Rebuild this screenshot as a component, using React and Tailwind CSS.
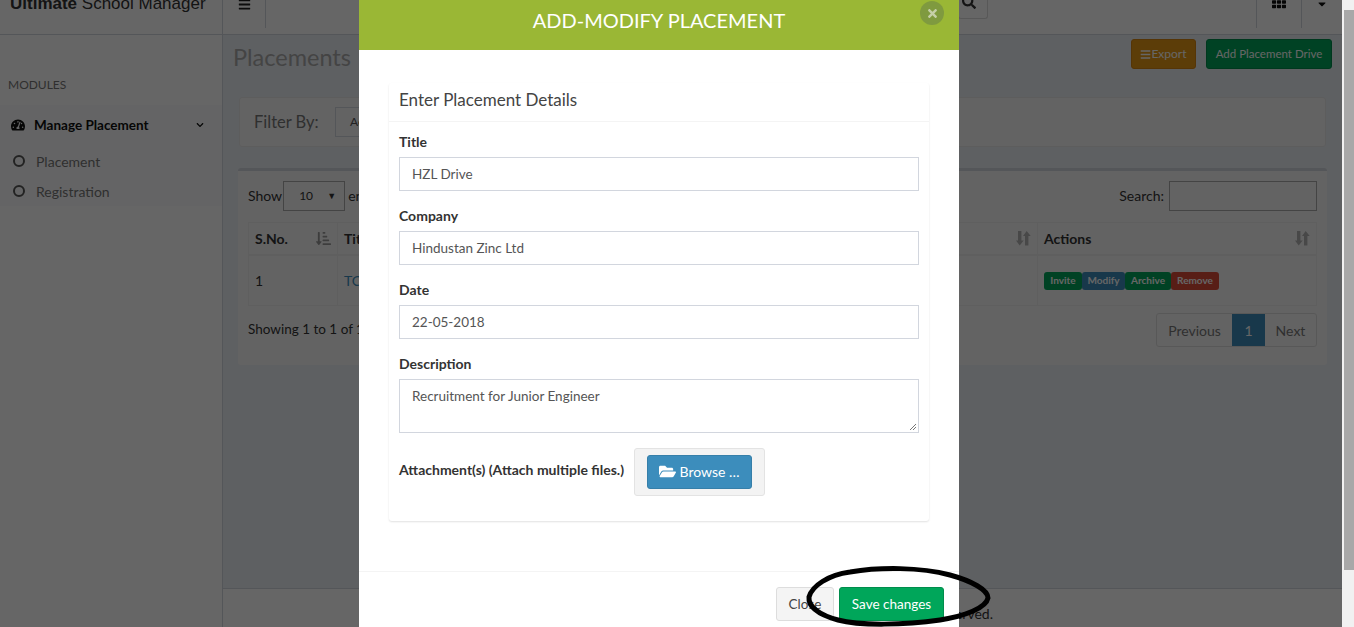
import React from "react";
import { FaBars, FaChevronDown, FaFolderOpen, FaSearch, FaSortAmountDownAlt, FaTachometerAlt, FaTh, FaTimes, FaCaretDown } from "react-icons/fa";

const bodyFont = { fontFamily: "Lato, 'Open Sans', sans-serif" };

const SortIcon = () => (
  <svg viewBox="0 0 16 16" className="w-[16px] h-[16px] text-[#b5b5b5]" fill="currentColor">
    <path d="M3 1h3.400v9.500h2.300L4.700 15.500 1 10.500h2z" />
    <path d="M10 15.500h3.400V6h2.300L11.700 1 8 6h2z" />
  </svg>
);

const Field = ({ label, value, height = "h-[34px]", multi, mb = "mb-[15px]" }) => (
  <div className={mb}>
    <label className="block text-[14px] font-bold leading-[20px] mb-[5px] text-[#333]">{label}</label>
    {multi ? (
      <div className={`w-full ${height} border border-[#d2d6de] px-3 py-[6px] text-[13.5px] leading-[20px] text-[#555] relative`}>
        {value}
        <svg viewBox="0 0 8 8" className="absolute right-[1px] bottom-[1px] w-2 h-2 text-[#777]" stroke="currentColor" fill="none">
          <path d="M1 7 7 1M4 7 7 4" />
        </svg>
      </div>
    ) : (
      <div className={`w-full ${height} border border-[#d2d6de] px-3 flex items-center text-[13.5px] text-[#555]`}>{value}</div>
    )}
  </div>
);

const Tag = ({ children, color, width }) => (
  <span className={`${color} ${width} text-white text-[10px] font-bold h-[18px] rounded-[3px] flex items-center justify-center`}>{children}</span>
);

const Page = () => (
  <div className="flex-1 flex flex-col h-full bg-[#ecf0f5] text-[#333]">
    <header className="h-[35px] shrink-0 flex bg-white border-b border-[#d2d6de]">
      <div className="w-[223px] shrink-0 border-r border-[#d2d6de] relative overflow-hidden">
        <div className="absolute left-[10px] top-[-6px] text-[17px] leading-[20px] text-[#333]" style={{ fontFamily: "'Liberation Sans', sans-serif" }}>
          <b>Ultimate</b> School Manager
        </div>
      </div>
      <div className="w-[43px] h-[28px] shrink-0 border-r border-[#d2d6de] flex justify-center">
        <FaBars className="mt-[-2px] text-[13px] text-[#222]" />
      </div>
      <div className="flex-1 flex justify-end">
        <div className="w-[30px] h-[19px] mr-[268px] pl-[3px] border border-t-0 border-[#ddd] rounded-b-[3px] flex justify-start">
          <FaSearch className="mt-[-5px] text-[14px] text-[#333]" />
        </div>
      </div>
      <div className="w-[46px] h-[28px] border-x border-[#d2d6de] flex justify-center">
        <FaTh className="mt-[-5px] text-[14px] text-[#111]" />
      </div>
      <div className="w-[40px] h-[28px] flex justify-center">
        <FaCaretDown className="mt-[-2px] text-[12px] text-[#111]" />
      </div>
    </header>

    <div className="flex flex-1 min-h-0">
      <aside className="w-[223px] shrink-0 bg-white border-r border-[#d2d6de]" style={bodyFont}>
        <div className="pl-2 pt-[43px] text-[12px] leading-[14px] text-[#777]">MODULES</div>
        <div className="mt-[13px] h-[101px] bg-[#fafbfc]">
          <div className="flex items-center h-[41px] pl-[11px] pr-[18px] pb-[1px] text-[13.5px] font-bold text-[#111]">
            <FaTachometerAlt className="text-[14px] w-[14px] mr-[9px]" />
            <span className="flex-1">Manage Placement</span>
            <FaChevronDown className="text-[8px]" />
          </div>
          <div className="flex items-center h-[30px] pl-[13px] text-[14px] text-[#777]">
            <span className="w-[12px] h-[12px] rounded-full border-2 border-[#555] mr-[11px]" />
            Placement
          </div>
          <div className="flex items-center h-[30px] pl-[13px] text-[14px] text-[#777]">
            <span className="w-[12px] h-[12px] rounded-full border-2 border-[#555] mr-[11px]" />
            Registration
          </div>
        </div>
      </aside>

      <main className="flex-1 flex flex-col min-w-0" style={bodyFont}>
        <div className="h-[62px] shrink-0 flex items-start pl-[10px] pr-[10px] pt-[4px]">
          <h1 className="flex-1 text-[23.5px] leading-[37px] text-[#aaa]">Placements</h1>
          <button className="w-[65px] h-[30px] bg-[#e69914] border border-[#d58512] rounded-[3px] text-white text-[12px] flex items-center justify-center">
            <FaBars className="text-[11px]" />Export
          </button>
          <button className="w-[126px] h-[30px] ml-[10px] bg-[#00a65a] border border-[#008d4c] rounded-[3px] text-white text-[11.500px]">
            Add Placement Drive
          </button>
        </div>

        <section className="mx-[16px] h-[50px] shrink-0 bg-[#f8f8f8] border border-[#e8e8e8] rounded-[3px] flex items-center pl-[14px]">
          <span className="text-[16.500px] w-[66px] text-[#777]">Filter By:</span>
          <span className="ml-[15px] w-[60px] h-[30px] border border-[#d2d6de] pl-[14px] flex items-center text-[12px] text-[#555]">Ac</span>
        </section>

        <section className="mx-[15px] mt-[21px] h-[197px] shrink-0 bg-[#f8f8f8] border-t-[3px] border-[#d2d6de] rounded-[3px] px-[10px] pt-[10px]">
          <div className="flex items-center h-[30px] text-[14px]">
            <span className="mb-[2px]">Show</span>
            <span className="ml-[1px] w-[62px] h-[30px] border border-[#aaa] flex items-center justify-between px-[15px] pr-[8px] text-[12px]">
              10 <span className="text-[9px]">▼</span>
            </span>
            <span className="ml-[3px] flex-1 mb-[2px]">entries</span>
            <span className="mb-[2px]">Search:</span>
            <span className="ml-[5px] w-[148px] h-[30px] border border-[#aaa]" />
          </div>
          <div className="mt-[11px] border border-[#eee]">
            <div className="flex h-[33px] border-b-2 border-[#eee] items-center text-[14px] font-bold">
              <div className="w-[89px] h-full px-[6px] pb-[1px] flex items-center justify-between border-r border-[#eee]">
                S.No. <FaSortAmountDownAlt className="text-[15px] text-[#999]" />
              </div>
              <div className="flex-1 h-full px-[6px] pb-[1px] flex items-center justify-between">Title <SortIcon /></div>
              <div className="w-[279px] h-full px-[6px] pb-[1px] flex items-center justify-between border-l border-[#eee]">Actions <SortIcon /></div>
            </div>
            <div className="flex h-[49px] items-center text-[14px]">
              <div className="w-[89px] h-full px-[6px] flex items-center border-r border-[#eee]">1</div>
              <div className="flex-1 h-full px-[6px] flex items-center text-[#3c8dbc]">TCS Drive</div>
              <div className="w-[279px] h-full px-[6px] flex items-center border-l border-[#eee]">
                <Tag color="bg-[#00a65a]" width="w-[38px]">Invite</Tag>
                <Tag color="bg-[#3c8dbc]" width="w-[43px]">Modify</Tag>
                <Tag color="bg-[#00a65a]" width="w-[46px]">Archive</Tag>
                <Tag color="bg-[#dd4b39]" width="w-[48px]">Remove</Tag>
              </div>
            </div>
          </div>
          <div className="mt-[7px] flex items-center justify-between text-[14px]">
            <span className="mb-[2px] text-[13.500px]">Showing 1 to 1 of 1 entries</span>
            <div className="flex h-[34px] border border-[#ddd] rounded-[3px] text-[#777]">
              <span className="w-[75px] flex items-center justify-center">Previous</span>
              <span className="w-[33px] flex items-center justify-center bg-[#3c8dbc] text-white">1</span>
              <span className="w-[51px] flex items-center justify-center">Next</span>
            </div>
          </div>
        </section>

        <div className="flex-1" />
        <footer className="h-[39px] shrink-0 bg-white border-t border-[#d2d6de] flex items-end pb-[3px] text-[14px] w-full">
          <span className="w-[770px] text-right">All rights reserved.</span>
        </footer>
      </main>
    </div>
  </div>
);

const Modal = () => (
  <div className="absolute inset-0 bg-black/60 pl-[359px]">
    <div className="w-[600px] h-full bg-white flex flex-col" style={bodyFont}>
      <div className="h-[50px] shrink-0 bg-[#9ab735] relative flex items-center justify-center pb-[10px] text-white text-[20px]">
        ADD-MODIFY PLACEMENT
        <span className="absolute right-[15px] top-[1px] w-[24px] h-[24px] rounded-full bg-[#7f9a3f] flex items-center justify-center">
          <FaTimes className="text-[13px] text-[#c5cfa8]" />
        </span>
      </div>
      <div className="flex-1 px-[30px] pt-[33px]">
        <div className="h-[438px] rounded-[3px] shadow-[0_1px_2px_rgba(0,0,0,0.12)]">
          <div className="h-[39px] border-b border-[#f4f4f4] px-[10px] text-[17px] leading-[34px] text-[#444]">Enter Placement Details</div>
          <div className="px-[10px] pt-[10px]">
            <Field label="Title" value="HZL Drive" />
            <Field label="Company" value="Hindustan Zinc Ltd" />
            <Field label="Date" value="22-05-2018" />
            <Field label="Description" value="Recruitment for Junior Engineer" height="h-[54px]" multi />
            <div className="flex items-center">
              <span className="text-[14px] font-bold text-[#333] w-[235px] mb-[5px]">Attachment(s) (Attach multiple files.)</span>
              <div className="w-[131px] h-[48px] bg-[#f3f3f3] border border-[#e3e3e3] rounded-[3px] flex items-center justify-center">
                <div className="w-[105px] h-[34px] bg-[#3c8dbc] border border-[#367fa9] rounded-[3px] text-white text-[14px] pb-[1px] flex items-center justify-center gap-[3px]">
                  <FaFolderOpen className="text-[17px]" /> Browse …
                </div>
              </div>
            </div>
          </div>
        </div>
      </div>
      <div className="h-[56px] shrink-0 border-t border-[#f4f4f4] flex justify-end gap-[5px] pt-[15px] pr-[15px] text-[13.500px]">
        <button className="w-[58px] h-[34px] bg-[#f4f4f4] border border-[#ddd] rounded-[3px] text-[#444]">Close</button>
        <button className="w-[105px] h-[34px] bg-[#00a65a] border border-[#008d4c] rounded-[3px] text-white">Save changes</button>
      </div>
    </div>
  </div>
);

const App = () => (
  <div className="relative flex w-[1354px] h-[627px] overflow-hidden bg-[#f1f1f1]">
    <div className="relative flex-1 h-full">
      <Page />
      <Modal />
    </div>
    <div className="w-[12px] h-full pl-[2px] pt-[10px]">
      <div className="h-[560px] bg-[#a8a8a8]" />
    </div>
    {/* hand drawn marker round the save button */}
    <svg className="absolute left-[800px] top-[560px] w-[200px] h-[67px]" viewBox="0 0 200 67" fill="none" stroke="#000" strokeWidth="5">
      <path d="M9 37C12 26 28 15 50 12 80 7 120 7 150 15 172 21 188 30 188 38 186 48 165 56 140 60 105 65 60 66 38 60 20 55 8 47 9 37Z" />
    </svg>
  </div>
);

export default App;
